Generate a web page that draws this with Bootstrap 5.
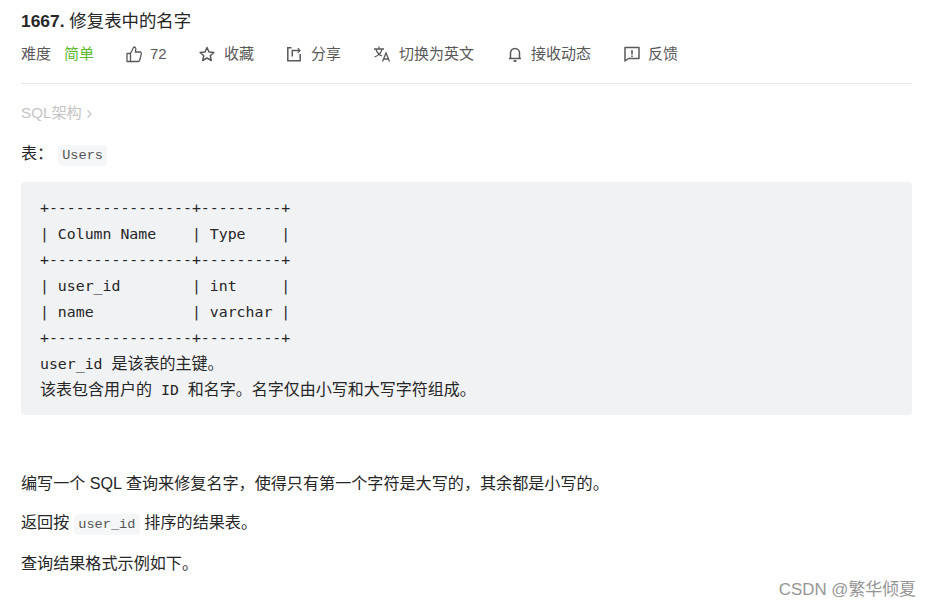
<!DOCTYPE html>
<html lang="zh">
<head>
<meta charset="utf-8">
<title>1667. 修复表中的名字</title>
<link rel="stylesheet" href="https://cdn.jsdelivr.net/npm/bootstrap@5.3.0/dist/css/bootstrap.min.css">
<style>
html,body{height:100%;}
body{font-family:"Liberation Sans","Noto Sans CJK SC",sans-serif;background:#fff;color:#262626;overflow:hidden;}
.page-wrap{position:relative;height:607px;padding:9px 19px 0 21px;}
.ttl{font-size:17.4px;line-height:24px;font-weight:400;color:#262626;margin:0;}
.ttl b{font-weight:700;}
.tools{height:34px;margin-top:4px;font-size:15px;color:#595959;}
.tool{display:flex;align-items:center;gap:7px;line-height:34px;}
.tool svg{width:18px;height:18px;flex:none;color:#595959;}
.wide-gap{gap:8px;}
.w-a{width:43px;}.w-b{width:61px;}.w-c{width:73px;}.w-d{width:87px;}.w-e{width:88px;}.w-f{width:133px;}.w-g{width:117px;}
.easy{color:#5cb82f;}
.rule{height:1px;background:#e8e8e8;margin-top:12px;}
.crumb{margin-top:18px;font-size:15.2px;line-height:22px;color:#c4c4c4;}
.para{font-size:16.1px;line-height:24px;color:#262626;margin:0;}
.ic{font-family:"Liberation Mono",monospace;font-size:13.6px;background:#f5f6f7;color:#545454;border-radius:4px;padding:3px 4.5px;}
.tbl-lbl{margin-top:17px;}
.codebox{margin:14px 0 0;padding:13px 19px;background:#f1f2f4;border-radius:4px;font-family:"DejaVu Sans Mono",monospace;font-size:14.85px;line-height:26px;color:#262626;height:233px;overflow:hidden;}
.codebox .cjk{font-family:"Noto Sans CJK SC",sans-serif;font-size:16px;line-height:1;}
.p1{margin-top:56px;}
.p2{margin-top:15px;}
.p3{margin-top:14px;}
.mark-wm{position:absolute;right:15px;top:579px;font-size:16.9px;line-height:22px;color:#969696;}
</style>
</head>
<body>
<div class="page-wrap">
  <h1 class="ttl"><b>1667.</b> 修复表中的名字</h1>
  <div class="tools d-flex align-items-center">
    <span class="tool w-a">难度</span>
    <span class="tool easy w-b">简单</span>
    <span class="tool w-c"><svg viewBox="0 0 18 18" fill="none" stroke="currentColor" stroke-width="1.3" stroke-linejoin="round"><path d="M2 8.500h3.500V16.500H2zM5.500 8.500L8.800 2c1.300 0 2.200 1 2 2.300L10.300 7h4.700c.9 0 1.500.9 1.300 1.800l-1.600 6.500c-.2.700-.8 1.200-1.500 1.200H5.500"/></svg>72</span>
    <span class="tool wide-gap w-d"><svg viewBox="0 0 18 18" fill="none" stroke="currentColor" stroke-width="1.500" stroke-linejoin="round"><path d="M9 2.500l2 4.500 4.900.5-3.700 3.200 1.100 4.800L9 13l-4.300 2.500 1.100-4.800L2.100 7.500 7 7z"/></svg>收藏</span>
    <span class="tool wide-gap w-e"><svg viewBox="0 0 18 18" fill="none" stroke="currentColor" stroke-width="1.500"><path d="M6.500 2.800H2.800v13h12.400V9"/><path d="M7.300 11.500V5.500h7.500"/><path d="M12.800 3.200L15 5.500l-2.200 2.300" stroke-width="1.200"/></svg>分享</span>
    <span class="tool wide-gap w-f"><svg viewBox="0 0 18 18" fill="none" stroke="currentColor" stroke-width="1.300"><path d="M1 4h10M6 1.500V4M9 4c-.6 3.500-3.500 6.500-7.500 8M3 4.500c1 3 3.500 5.500 6 6.500"/><path d="M9.500 16.500l3.500-8.500 3.500 8.500M10.700 14h4.600"/></svg>切换为英文</span>
    <span class="tool w-g"><svg viewBox="0 0 18 18" fill="none" stroke="currentColor" stroke-width="1.500" stroke-linejoin="round"><path d="M4.500 13.500V8a4.500 4.500 0 0 1 9 0v5.500M3 13.500h12"/><path d="M7.500 16h3" stroke-width="1.800"/></svg>接收动态</span>
    <span class="tool"><svg viewBox="0 0 18 18" fill="none" stroke="currentColor" stroke-width="1.500" stroke-linejoin="round"><path d="M2 2.500h14v11H5.500L2 16z"/><path d="M9 5v4.500M9 10.500v1.500" stroke-width="1.600"/></svg>反馈</span>
  </div>
  <div class="rule"></div>
  <div class="crumb">SQL架构 <svg width="7" height="10" viewBox="0 0 7 10" fill="none" stroke="#c4c4c4" stroke-width="1.200"><path d="M1.500 1.500L5 5 1.500 8.500"/></svg></div>
  <p class="para tbl-lbl">表&#xFF1A; <code class="ic">Users</code></p>
  <pre class="codebox">+----------------+---------+
| Column Name    | Type    |
+----------------+---------+
| user_id        | int     |
| name           | varchar |
+----------------+---------+
user_id <span class="cjk">是该表的主键。</span>
<span class="cjk">该表包含用户的</span> ID <span class="cjk">和名字。名字仅由小写和大写字符组成。</span></pre>
  <p class="para p1">编写一个 SQL 查询来修复名字&#xFF0C;使得只有第一个字符是大写的&#xFF0C;其余都是小写的。</p>
  <p class="para p2">返回按 <code class="ic">user_id</code> 排序的结果表。</p>
  <p class="para p3">查询结果格式示例如下。</p>
  <div class="mark-wm">CSDN @繁华倾夏</div>
</div>
</body>
</html>
